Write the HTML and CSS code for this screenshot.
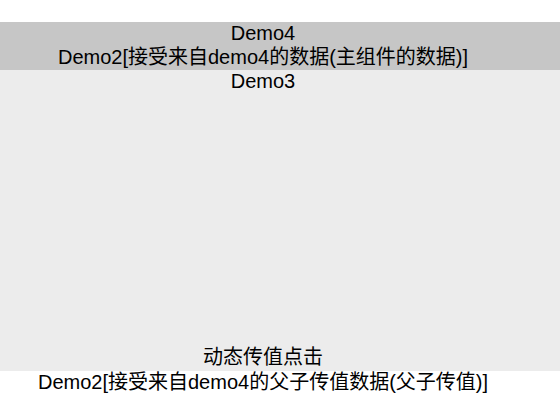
FILE: index.html
```html
<!DOCTYPE html>
<html lang="zh-CN">
<head>
    <meta charset="UTF-8">
    <meta name="viewport" content="width=device-width, initial-scale=1.0">
    <title>Demo4</title>
    <link rel="stylesheet" href="styles.css">
</head>
<body>
    <div class="demo4">
        <div class="line">Demo4</div>
        <div class="line">Demo2[接受来自demo4的数据(主组件的数据)]</div>
    </div>

    <div class="demo3">
        <div class="line">Demo3</div>
        <div class="line send-btn">动态传值点击</div>
    </div>

    <div class="line child-data">Demo2[接受来自demo4的父子传值数据(父子传值)]</div>
</body>
</html>
```

FILE: styles.css
```css
body {
    margin: 0;
    padding-top: 22px;
    font-family: "Liberation Sans", Arial, "Noto Sans CJK SC", sans-serif;
    font-size: 20px;
    color: #000;
    text-align: center;
}

.line {
    line-height: 20px;
    padding: 1px 34px 3px 0;
}

.demo4 {
    background-color: #c6c6c6;
}

.demo3 {
    background-color: #ececec;
    height: 301px;
    display: flex;
    flex-direction: column;
    justify-content: space-between;
}

.send-btn {
    padding-bottom: 4px;
    cursor: pointer;
}

.child-data {
    padding-top: 1px;
}
```
